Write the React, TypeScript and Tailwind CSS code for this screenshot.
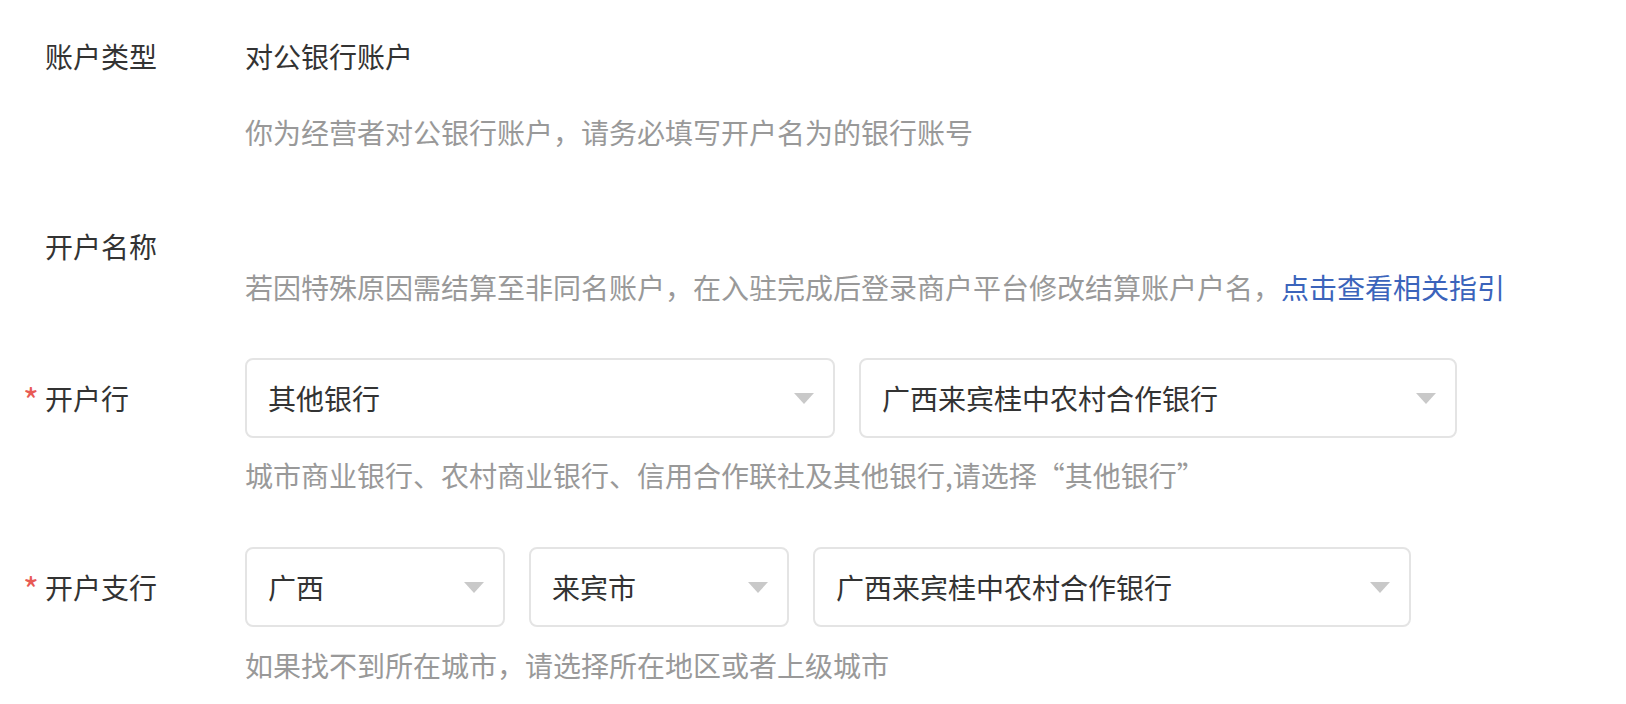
import React from 'react';

type FieldProps = {
  label: string;
  required?: boolean;
  hint?: React.ReactNode;
  children?: React.ReactNode;
  className?: string;
};

const Field: React.FC<FieldProps> = ({ label, required, hint, children, className }) => (
  <div className={`flex ${className ?? ''}`}>
    <div className={`w-[245px] shrink-0 pl-[23px] flex items-center self-start ${required ? 'h-[80px]' : 'h-[40px]'}`}>
      <span className="w-[22px] text-[34px] text-[#e85a55] leading-[40px] pt-[4px]">{required ? '*' : ''}</span>
      <span className="text-[#333333] leading-[40px]">{label}</span>
    </div>
    <div className="flex flex-col">
      {children}
      {hint}
    </div>
  </div>
);

const Select: React.FC<{ value: string; width: string }> = ({ value, width }) => (
  <div
    className={`${width} h-[80px] flex items-center justify-between pl-[21px] pr-[19px] border-2 border-[#e4e4e4] rounded-lg bg-white`}
  >
    <span className="text-[#333333]">{value}</span>
    <svg width="20" height="11" viewBox="0 0 20 11">
      <path d="M0 0 L20 0 L10 11 Z" fill="#c9c9c9" />
    </svg>
  </div>
);

const App: React.FC = () => {
  return (
    <div
      className="w-[1626px] h-[704px] bg-white pt-[36px] text-[28px] overflow-hidden"
      style={{ fontFamily: '"Noto Sans CJK SC", "Noto Sans", sans-serif' }}
    >
      <Field
        label="账户类型"
        hint={<p className="mt-[36px] text-[#999999] leading-[40px]">你为经营者对公银行账户，请务必填写开户名为的银行账号</p>}
      >
        <span className="text-[#333333] leading-[40px]">对公银行账户</span>
      </Field>

      <Field
        label="开户名称"
        className="mt-[74px]"
        hint={
          <p className="mt-[1px] text-[#999999] leading-[40px] whitespace-nowrap">
            若因特殊原因需结算至非同名账户，在入驻完成后登录商户平台修改结算账户户名，
            <span className="text-[#3b64bb]">点击查看相关指引</span>
          </p>
        }
      >
        <div className="h-[40px]" />
      </Field>

      <Field
        label="开户行"
        required
        className="mt-[51px]"
        hint={<p className="mt-[17px] text-[#999999] leading-[40px]">城市商业银行、农村商业银行、信用合作联社及其他银行,请选择“其他银行”</p>}
      >
        <div className="flex gap-[24px]">
          <Select value="其他银行" width="w-[590px]" />
          <Select value="广西来宾桂中农村合作银行" width="w-[598px]" />
        </div>
      </Field>

      <Field
        label="开户支行"
        required
        className="mt-[52px]"
        hint={<p className="mt-[18px] text-[#999999] leading-[40px]">如果找不到所在城市，请选择所在地区或者上级城市</p>}
      >
        <div className="flex gap-[24px]">
          <Select value="广西" width="w-[260px]" />
          <Select value="来宾市" width="w-[260px]" />
          <Select value="广西来宾桂中农村合作银行" width="w-[598px]" />
        </div>
      </Field>
    </div>
  );
};

export default App;
